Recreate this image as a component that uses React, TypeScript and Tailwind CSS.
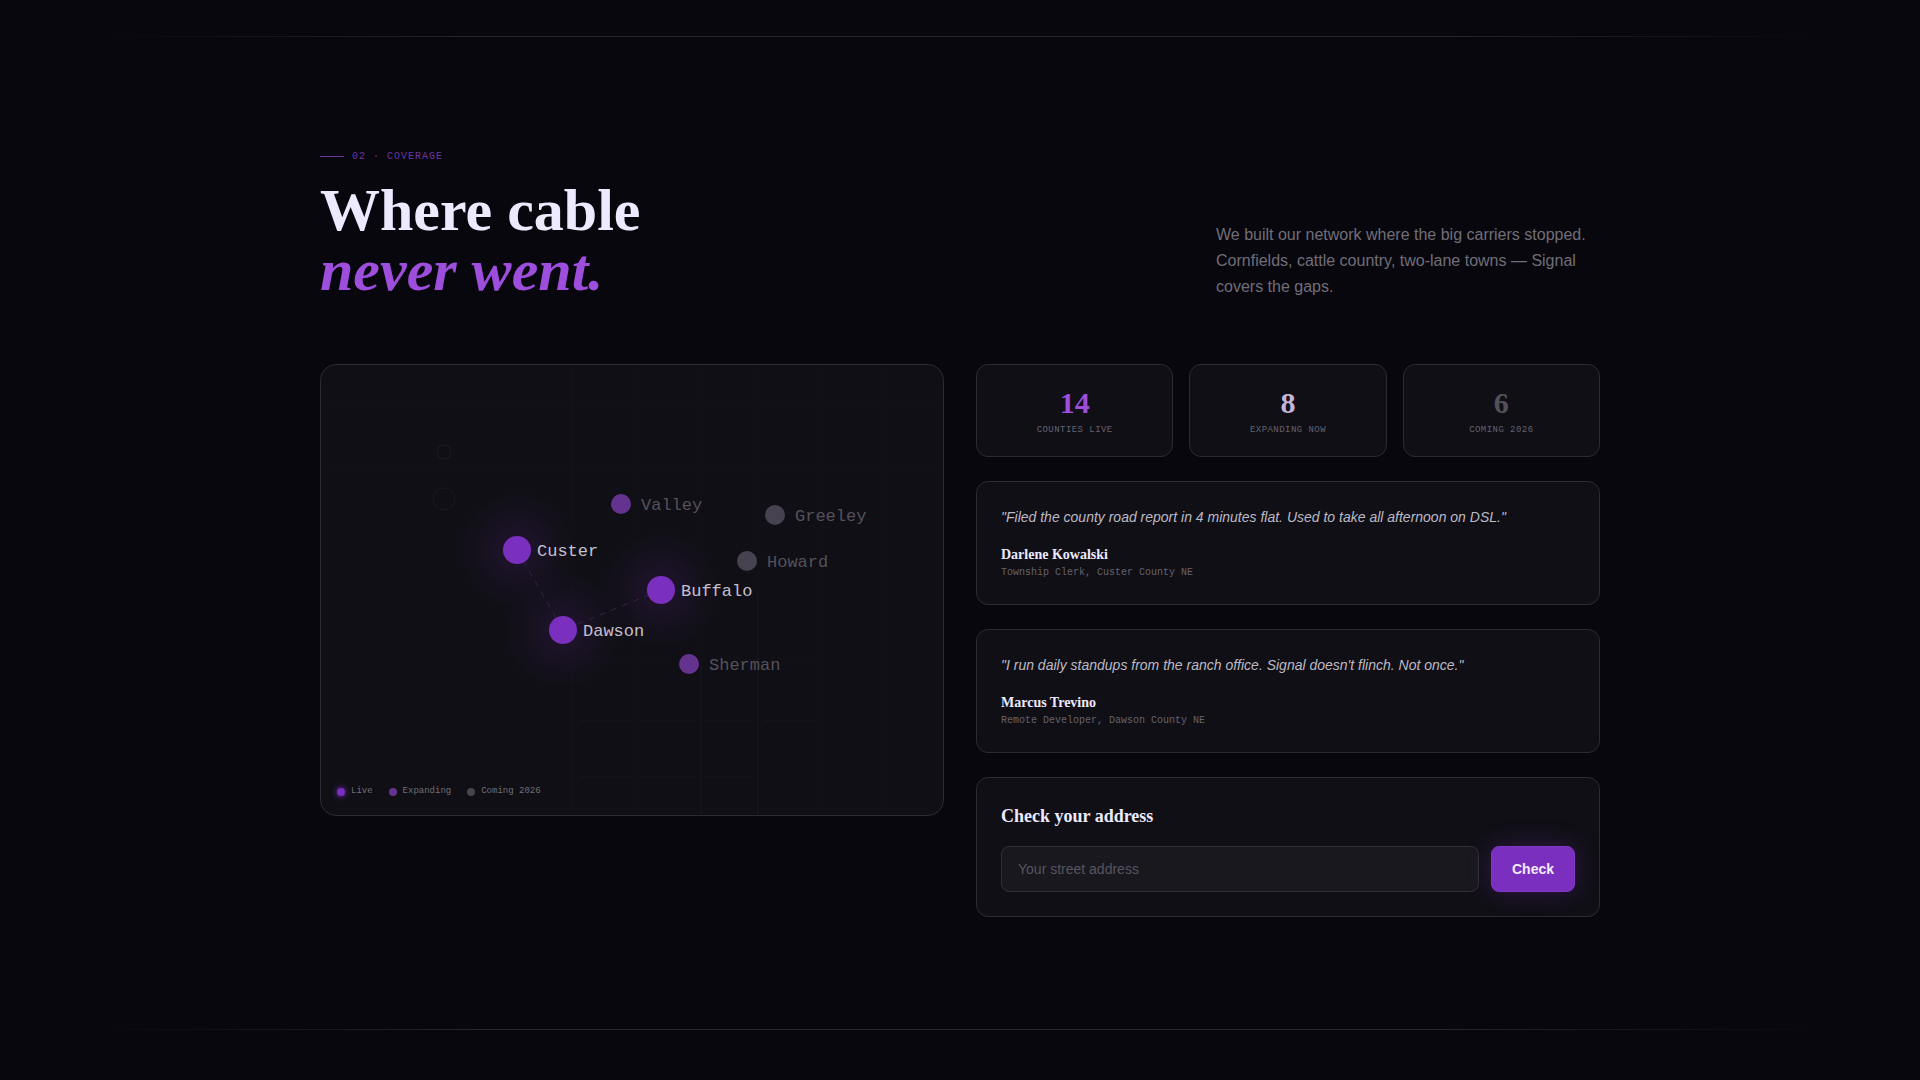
import { useState } from 'react';

type Status = 'live' | 'expanding' | 'coming';

const counties: { name: string; x: number; y: number; status: Status }[] = [
  { name: 'Custer', x: 196, y: 185, status: 'live' },
  { name: 'Dawson', x: 242, y: 265, status: 'live' },
  { name: 'Buffalo', x: 340, y: 225, status: 'live' },
  { name: 'Valley', x: 300, y: 139, status: 'expanding' },
  { name: 'Sherman', x: 368, y: 299, status: 'expanding' },
  { name: 'Greeley', x: 454, y: 150, status: 'coming' },
  { name: 'Howard', x: 426, y: 196, status: 'coming' },
];

const dotFill = {
  live: 'fill-[#7b2fbe]',
  expanding: 'fill-[#643390]',
  coming: 'fill-[#47424f]',
};

const stats = [
  { value: '14', label: 'Counties live', color: 'text-[#9d4edd]' },
  { value: '8', label: 'Expanding now', color: 'text-[#c4b5d9]' },
  { value: '6', label: 'Coming 2026', color: 'text-[#53505c]' },
];

const quotes = [
  {
    text: '"Filed the county road report in 4 minutes flat. Used to take all afternoon on DSL."',
    name: 'Darlene Kowalski',
    role: 'Township Clerk, Custer County NE',
  },
  {
    text: '"I run daily standups from the ranch office. Signal doesn\'t flinch. Not once."',
    name: 'Marcus Trevino',
    role: 'Remote Developer, Dawson County NE',
  },
];

const legend = [
  { label: 'Live', dot: 'bg-[#7b2fbe] shadow-[0_0_6px_#7b2fbe]' },
  { label: 'Expanding', dot: 'bg-[#643390]' },
  { label: 'Coming 2026', dot: 'bg-[#47464d]' },
];

const card = 'border border-[#2c2b31] bg-[#100f15]';
const serif = "font-['Liberation_Serif',serif]";
const mono = "font-['Liberation_Mono',monospace]";

function Divider() {
  return (
    <div className="h-px bg-[linear-gradient(to_right,transparent_5%,#26252b_25%,#26252b_75%,transparent_95%)]" />
  );
}

function CoverageMap() {
  return (
    <div className={`relative self-start overflow-hidden rounded-2xl ${card}`}>
      <svg viewBox="0 0 622 450" className="block w-full" role="img" aria-label="County coverage map">
        <defs>
          <radialGradient id="glow">
            <stop offset="0" stopColor="#7b2fbe" stopOpacity="0.17" />
            <stop offset="0.4" stopColor="#7b2fbe" stopOpacity="0.09" />
            <stop offset="0.75" stopColor="#7b2fbe" stopOpacity="0.03" />
            <stop offset="1" stopColor="#7b2fbe" stopOpacity="0" />
          </radialGradient>
        </defs>
        <path
          d="M251 0V450M316 0V450M380 0V450M437 0V450M501 0V450M565 0V450M0 40H622M0 105H622M251 294H501"
          className="fill-none stroke-[#131218]"
        />
        <path
          d="M258 356H312M320 356H374M384 356H432M442 356H497M258 412H312M320 412H374M384 412H432M380 300V450M437 230V450"
          className="fill-none stroke-[#18171d]"
        />
        <circle cx="123" cy="87" r="7" className="fill-none stroke-[#1d1b29]" />
        <circle cx="123" cy="134" r="11" className="fill-none stroke-[#1c1926]" />
        {counties.map((c) =>
          c.status === 'live' ? <circle key={c.name} cx={c.x} cy={c.y} r="60" fill="url(#glow)" /> : null
        )}
        <path d="M196 185L242 265L340 225" strokeDasharray="6 6" className="fill-none stroke-[#3a2148]" />
        {counties.map((c) => (
          <g key={c.name}>
            <circle cx={c.x} cy={c.y} r={c.status === 'live' ? 14 : 10} className={dotFill[c.status]} />
            <text
              x={c.x + 20}
              y={c.y + 6}
              className={`text-[17px] ${mono} ${c.status === 'live' ? 'fill-[#c4c0cd]' : 'fill-[#54515c]'}`}
            >
              {c.name}
            </text>
          </g>
        ))}
      </svg>
      <ul className={`absolute bottom-[19px] left-4 flex gap-4 text-[9px] leading-[10px] text-[#716e79] ${mono}`}>
        {legend.map((l) => (
          <li key={l.label} className="flex items-end gap-1.5">
            <span className={`size-2 rounded-full ${l.dot}`} />
            {l.label}
          </li>
        ))}
      </ul>
    </div>
  );
}

export default function App() {
  const [address, setAddress] = useState('');

  return (
    <main className="min-h-screen bg-[#08070d] pt-9 pb-12 font-['Liberation_Sans',sans-serif] text-[#ede9fe]">
      <Divider />
      <section className="mx-auto max-w-7xl pt-[111px] pb-28">
        <header className="mb-16 flex items-end justify-between">
          <div>
            <p className={`mb-[15px] flex items-center gap-2 text-[10px] leading-[17px] tracking-[1px] text-[#6b35a2] uppercase ${mono}`}>
              <span className="h-px w-6 bg-[#6b35a2]" />
              02 · Coverage
            </p>
            <h2 className={`text-6xl leading-none font-bold ${serif}`}>
              Where cable
              <br />
              <em className="text-[#9d4edd]">never went.</em>
            </h2>
          </div>
          <p className="max-w-sm text-base leading-[26px] text-[#716e79]">
            We built our network where the big carriers stopped. Cornfields, cattle country, two-lane towns — Signal
            covers the gaps.
          </p>
        </header>

        <div className="grid grid-cols-2 gap-8">
          <CoverageMap />

          <div className="flex flex-col gap-6">
            <dl className="grid grid-cols-3 gap-4">
              {stats.map((s) => (
                <div key={s.label} className={`flex flex-col-reverse rounded-xl p-5 text-center ${card}`}>
                  <dt className={`mt-1 text-[9px] leading-[11px] tracking-wider text-[#65626e] uppercase ${mono}`}>
                    {s.label}
                  </dt>
                  <dd className={`text-3xl leading-9 font-bold ${serif} ${s.color}`}>{s.value}</dd>
                </div>
              ))}
            </dl>

            {quotes.map((q) => (
              <figure key={q.name} className={`rounded-xl p-6 ${card}`}>
                <blockquote className="mb-4 text-sm leading-[23px] text-[#bcb9c5] italic">{q.text}</blockquote>
                <figcaption>
                  <div className={`text-sm leading-5 font-bold ${serif}`}>{q.name}</div>
                  <div className={`text-[10px] leading-[15px] text-[#65626e] ${mono}`}>{q.role}</div>
                </figcaption>
              </figure>
            ))}

            <form className={`rounded-xl p-6 ${card}`} onSubmit={(e) => e.preventDefault()}>
              <label htmlFor="address" className={`mb-4 block text-lg leading-7 font-bold ${serif}`}>
                Check your address
              </label>
              <div className="flex gap-3">
                <input
                  id="address"
                  type="text"
                  placeholder="Your street address"
                  value={address}
                  onChange={(e) => setAddress(e.target.value)}
                  className="min-w-0 flex-1 rounded-lg border border-[#302f35] bg-[#19181e] px-4 py-3 text-sm placeholder:text-[#575460] focus:outline-none"
                />
                <button
                  type="submit"
                  className="rounded-lg border border-[#8236c6] bg-[#7b2fbe] px-5 py-3 text-sm font-bold text-[#f3ecff] shadow-[0_0_24px_rgba(123,47,190,0.3)]"
                >
                  Check
                </button>
              </div>
            </form>
          </div>
        </div>
      </section>
      <Divider />
    </main>
  );
}
